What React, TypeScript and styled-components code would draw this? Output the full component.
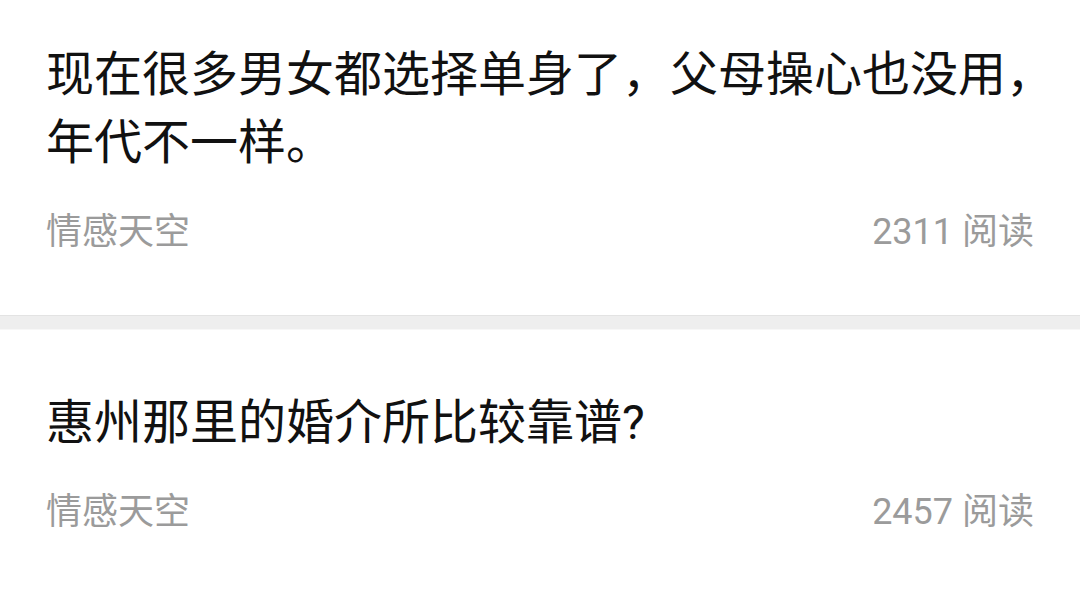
import React from 'react';
import styled, { createGlobalStyle } from 'styled-components';

interface Post {
  title: string;
  channel: string;
  reads: number;
}

const posts: Post[] = [
  {
    title: '现在很多男女都选择单身了，父母操心也没用，年代不一样。',
    channel: '情感天空',
    reads: 2311,
  },
  {
    title: '惠州那里的婚介所比较靠谱?',
    channel: '情感天空',
    reads: 2457,
  },
];

const GlobalStyle = createGlobalStyle`
  html, body {
    margin: 0;
    padding: 0;
    background: #ffffff;
    overflow: hidden;
  }
  body {
    font-family: Roboto, "Noto Sans CJK SC", sans-serif;
  }
`;

const Feed = styled.ul`
  list-style: none;
  margin: -18px 0 0;
  padding: 0;
  width: 1080px;
`;

const Card = styled.li`
  display: flex;
  flex-direction: column;
  gap: 30px;
  padding: 59px 24px 58px 46px;
  background: #ffffff;
`;

const Divider = styled.li`
  height: 13px;
  background: #eeeeee;
  border-top: 1px solid #e3e3e3;
  border-bottom: 1px solid #f7f7f7;
`;

const Title = styled.h3`
  margin: 0;
  font-family: Roboto, "Noto Sans CJK SC", sans-serif;
  font-size: 48px;
  line-height: 68px;
  font-weight: 400;
  color: #111111;
`;

const Meta = styled.div`
  display: flex;
  justify-content: space-between;
  align-items: center;
  padding-right: 22px;
  font-size: 36px;
  line-height: 50px;
  color: #9b9b9b;
`;

const PostCard: React.FC<Post> = (post) => (
  <Card>
    <Title>{post.title}</Title>
    <Meta>
      <span>{post.channel}</span>
      <span>{post.reads} 阅读</span>
    </Meta>
  </Card>
);

const App: React.FC = () => (
  <>
    <GlobalStyle />
    <Feed>
      {posts.map((post, i) => (
        <React.Fragment key={i}>
          {i > 0 && <Divider />}
          <PostCard {...post} />
        </React.Fragment>
      ))}
    </Feed>
  </>
);

export default App;
